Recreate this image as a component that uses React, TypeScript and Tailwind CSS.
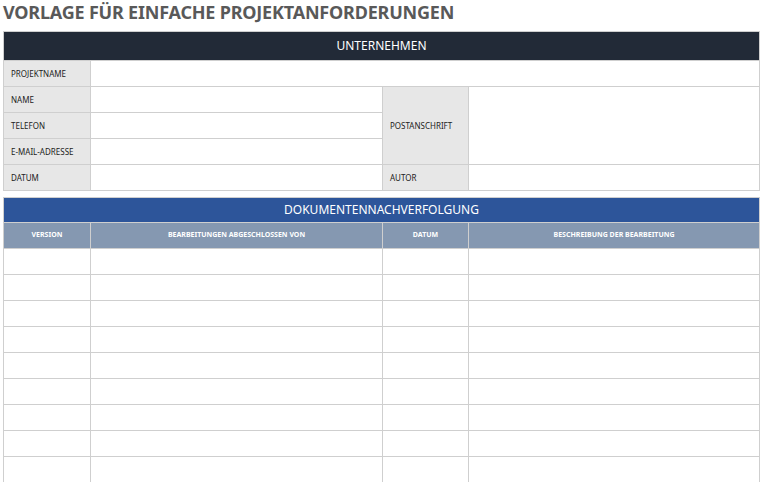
const cols = "grid grid-cols-[86px_291px_85px_290px]";
const label = "bg-[#e7e7e7] flex items-center pl-[7px] text-[8px] text-[#222]";
const cell = "bg-white";

export default function App() {
  return (
    <div className="w-[764px] h-[482px] bg-white font-['Lato','Liberation_Sans',sans-serif] px-[3px] pt-[1px]">
      <h1 className="text-[18px] font-bold text-[#595959] leading-[20px] h-[30px] pt-[1px] tracking-[-0.2px]">
        VORLAGE FÜR EINFACHE PROJEKTANFORDERUNGEN
      </h1>
      <div className={`${cols} grid-rows-[28px_repeat(5,25px)] gap-px bg-[#cfcfcf] border border-[#cfcfcf] w-[757px]`}>
        <div className="col-span-4 bg-[#222a37] text-white text-[12px] flex items-center justify-center">UNTERNEHMEN</div>
        <div className={label}>PROJEKTNAME</div>
        <div className={`${cell} col-span-3`} />
        <div className={label}>NAME</div>
        <div className={cell} />
        <div className={`${label} row-span-3`}>POSTANSCHRIFT</div>
        <div className={`${cell} row-span-3`} />
        <div className={label}>TELEFON</div>
        <div className={cell} />
        <div className={label}>E-MAIL-ADRESSE</div>
        <div className={cell} />
        <div className={label}>DATUM</div>
        <div className={cell} />
        <div className={label}>AUTOR</div>
        <div className={cell} />
      </div>
      <div className={`${cols} grid-rows-[24px_25px_repeat(9,25px)] gap-px bg-[#cfcfcf] border border-[#cfcfcf] w-[757px] mt-[6px]`}>
        <div className="col-span-4 bg-[#2d559a] text-white text-[12px] flex items-center justify-center">DOKUMENTENNACHVERFOLGUNG</div>
        {["VERSION", "BEARBEITUNGEN ABGESCHLOSSEN VON", "DATUM", "BESCHREIBUNG DER BEARBEITUNG"].map((h) => (
          <div key={h} className="bg-[#8598b1] text-white text-[7px] font-bold flex items-center justify-center">{h}</div>
        ))}
        {Array.from({ length: 36 }).map((_, i) => (
          <div key={i} className={cell} />
        ))}
      </div>
    </div>
  );
}
